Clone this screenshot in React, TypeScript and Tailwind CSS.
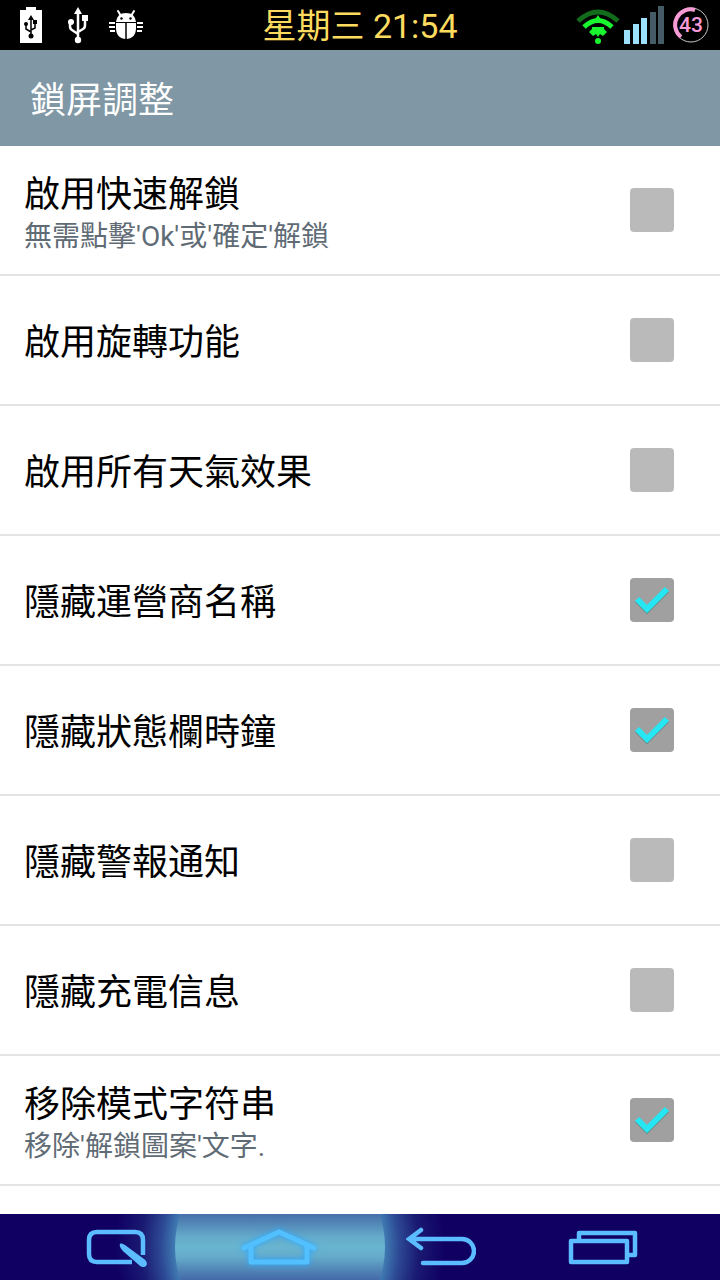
import { useState } from 'react';

const preferences = [
  { id: 'quick-unlock', title: '啟用快速解鎖', summary: "無需點擊'Ok'或'確定'解鎖", checked: false },
  { id: 'rotation', title: '啟用旋轉功能', checked: false },
  { id: 'weather', title: '啟用所有天氣效果', checked: false },
  { id: 'carrier', title: '隱藏運營商名稱', checked: true },
  { id: 'clock', title: '隱藏狀態欄時鐘', checked: true },
  { id: 'alarm', title: '隱藏警報通知', checked: false },
  { id: 'charging', title: '隱藏充電信息', checked: false },
  { id: 'pattern', title: '移除模式字符串', summary: "移除'解鎖圖案'文字.", checked: true }
];

function UsbBatteryIcon() {
  return (
    <svg width="24" height="38" viewBox="0 0 24 38">
      <path d="M7 1h10v3h6v33H1V4h6z" fill="#fff" />
      <g stroke="#000" strokeWidth="1.5" fill="none">
        <path d="M12 13v16M12 26l-5-3v-4M12 24l4-2v-5" />
      </g>
      <path d="M12 9l3 5H9zM14 14h4v4h-4z" fill="#000" />
      <circle cx="7" cy="18" r="2" />
      <circle cx="12" cy="30" r="2.5" />
    </svg>
  );
}

function UsbIcon() {
  return (
    <svg width="22" height="38" viewBox="0 0 22 38">
      <path d="M11 5v29M11 28l-6-4q-2-1-2-4v-4M11 26l5-3q2-1 2-4v-5" stroke="#fff" strokeWidth="2.5" fill="none" />
      <path d="M11 1l4 7H7zM15 9h6v6h-6z" fill="#fff" />
      <circle cx="4" cy="16" r="3" fill="#fff" />
      <circle cx="11" cy="34" r="3.2" fill="#fff" />
    </svg>
  );
}

function BugIcon() {
  return (
    <svg width="34" height="38" viewBox="0 0 34 38">
      <path d="M9 5l3 5M25 5l-3 5" stroke="#fff" strokeWidth="2" strokeLinecap="round" />
      <path d="M7 16q1-9 10-9t10 9z" fill="#fff" />
      <path d="M7 17h20v5c0 7-4 11-10 11S7 29 7 22z" fill="#fff" />
      <path d="M0 17h6M0 21h6M1 25h5M28 17h6M28 21h6M28 25h5" stroke="#fff" strokeWidth="2" />
      <path d="M17 17v16" stroke="#000" strokeWidth="1.5" />
      <path d="M7 16.5h20" stroke="#000" />
      <circle cx="12.5" cy="12.5" r="1.2" />
      <circle cx="21.5" cy="12.5" r="1.2" />
    </svg>
  );
}

function WifiIcon() {
  return (
    <svg width="44" height="38" viewBox="0 -3 44 38" fill="none">
      <path d="M2 12Q22-6 42 12" stroke="#136b1c" strokeWidth="5" />
      <path d="M8 18Q22 5 36 18" stroke="#19f52e" strokeWidth="5" />
      <path d="M22 6l4 6h-8zM16 18h12v2l3 3-4 4-3-2-2 3-2-3-3 2-4-4 3-3z" fill="#19f52e" />
      <circle cx="22" cy="32" r="3" fill="#19f52e" />
    </svg>
  );
}

function SignalIcon() {
  return (
    <svg width="41" height="38" viewBox="0 0 41 38">
      <path d="M0 24h6v14H0zM9 18h6v20H9zM17 12h6v26h-6z" fill="#9de0fb" />
      <path d="M26 6h6v32h-6zM34 0h6v38h-6z" fill="#455c66" />
    </svg>
  );
}

function BatteryLevel({ level }: { level: number }) {
  return (
    <div className="relative flex h-9 w-9 items-center justify-center">
      <svg className="absolute inset-0" width="36" height="36" viewBox="0 0 36 36" fill="none">
        <circle cx="18" cy="18" r="17" stroke="#c8c8c8" />
        <path d="M22 3A15.5 15.5 0 0 0 8 30" stroke="#f79ad6" strokeWidth="4" />
      </svg>
      <span className="relative text-[21px] leading-none font-medium text-[#f79ad6]">{level}</span>
    </div>
  );
}

function StatusBar() {
  return (
    <div className="flex h-[50px] items-center bg-black px-[11px]">
      <div className="flex flex-1 items-center">
        <div className="ml-2">
          <UsbBatteryIcon />
        </div>
        <div className="ml-6">
          <UsbIcon />
        </div>
        <div className="ml-5">
          <BugIcon />
        </div>
      </div>
      <time className="pt-0.5 text-[34px] leading-[48px] text-[#fddb5f]">星期三 21:54</time>
      <div className="flex flex-1 items-center justify-end">
        <WifiIcon />
        <div className="ml-1">
          <SignalIcon />
        </div>
        <div className="ml-2">
          <BatteryLevel level={43} />
        </div>
      </div>
    </div>
  );
}

interface PreferenceRowProps {
  id: string;
  title: string;
  summary?: string;
  checked: boolean;
  onToggle: () => void;
}

function PreferenceRow({ id, title, summary, checked, onToggle }: PreferenceRowProps) {
  return (
    <li className="flex min-h-[130px] items-center justify-between border-b-2 border-[#e4e4e4] pr-[46px] pl-6">
      <label htmlFor={id} className="flex-1 pt-1.5">
        <span className="block text-4xl leading-[48px] text-black">{title}</span>
        {summary && <span className="block text-[28px] leading-9 text-[#5f6b75]">{summary}</span>}
      </label>
      <div className="relative h-11 w-11">
        <input
          id={id}
          type="checkbox"
          checked={checked}
          onChange={onToggle}
          className="block h-11 w-11 appearance-none rounded bg-[#bababa] checked:bg-[#a0a0a0]"
        />
        {checked && (
          <svg className="pointer-events-none absolute inset-0" width="44" height="44" viewBox="0 0 44 44" fill="none">
            <path d="M7 22l10 10 20-20" stroke="#6f7f80" strokeWidth="6" />
            <path d="M7 21l10 10 20-20" stroke="#25e6f2" strokeWidth="6" />
          </svg>
        )}
      </div>
    </li>
  );
}

function NavigationBar() {
  return (
    <nav className="flex h-[66px] overflow-hidden bg-[#0f0062] px-9">
      <button aria-label="Memo" className="relative z-10 flex flex-1 items-center justify-center">
        <svg width="64" height="42" viewBox="0 0 64 42" fill="none">
          <path d="M47 36H12q-8 0-8-8V14q0-8 8-8h38q8 0 8 8v15" stroke="#5bbcff" strokeWidth="4.5" />
          <path d="M35 18c1-1 3 0 5 1l19 14c4 3 3 6 2 7s-4 2-7-1L39 26c-3-3-5-6-4-8z" fill="#5bbcff" />
        </svg>
      </button>
      <button aria-label="Home" className="relative flex flex-1 items-center justify-center">
        <svg className="absolute left-1/2 -translate-x-1/2" width="350" height="66" viewBox="0 0 350 66">
          <defs>
            <radialGradient id="glow" gradientUnits="userSpaceOnUse" cx="176" cy="33" r="165">
              <stop offset="0.62" stopColor="#4384b8" />
              <stop offset="0.72" stopColor="#2d4a95" />
              <stop offset="0.84" stopColor="#1a1a72" />
              <stop offset="1" stopColor="#0f0062" />
            </radialGradient>
            <linearGradient id="pressed" x1="0" y1="0" x2="0" y2="66" gradientUnits="userSpaceOnUse">
              <stop offset="0" stopColor="#466fa9" />
              <stop offset="0.35" stopColor="#65abcb" />
              <stop offset="0.5" stopColor="#69b5d0" />
              <stop offset="0.65" stopColor="#65abcb" />
              <stop offset="1" stopColor="#4369a7" />
            </linearGradient>
          </defs>
          <rect width="350" height="66" fill="url(#glow)" />
          <circle cx="176" cy="33" r="105" fill="url(#pressed)" />
        </svg>
        <svg className="relative drop-shadow-[0_0_3px_#2ba8ff]" width="78" height="40" viewBox="0 0 78 40" fill="none">
          <path d="M4 21L39 5l35 16M11 19v16h56V19" stroke="#52c0ff" strokeWidth="5" strokeLinecap="round" strokeLinejoin="round" />
        </svg>
      </button>
      <button aria-label="Back" className="relative z-10 flex flex-1 items-center justify-center">
        <svg width="70" height="40" viewBox="0 0 70 40" fill="none">
          <path d="M15 3L3 12l12 9M4 12h52a12 12 0 0 1 0 24H17" stroke="#5bbcff" strokeWidth="4.5" strokeLinecap="round" />
        </svg>
      </button>
      <button aria-label="Recent apps" className="relative z-10 flex flex-1 items-center justify-center">
        <svg width="70" height="40" viewBox="0 0 70 40" fill="none">
          <path d="M3 14h56v21H3zM11 13V6h56v22h-8" stroke="#5bbcff" strokeWidth="4.5" strokeLinejoin="round" />
        </svg>
      </button>
    </nav>
  );
}

export default function App() {
  const [items, setItems] = useState(preferences);

  const toggle = (id: string) => {
    setItems(items.map((item) => (item.id === id ? { ...item, checked: !item.checked } : item)));
  };

  return (
    <div className="flex min-h-screen flex-col bg-white font-[Roboto,'Noto_Sans_CJK_SC',sans-serif]">
      <StatusBar />
      <header className="flex h-24 items-center bg-[#8097a5] px-[30px] pt-1.5">
        <h1 className="text-4xl leading-[48px] text-white">鎖屏調整</h1>
      </header>
      <main className="flex-1">
        <ul>
          {items.map((item) => (
            <PreferenceRow key={item.id} {...item} onToggle={() => toggle(item.id)} />
          ))}
        </ul>
      </main>
      <NavigationBar />
    </div>
  );
}
